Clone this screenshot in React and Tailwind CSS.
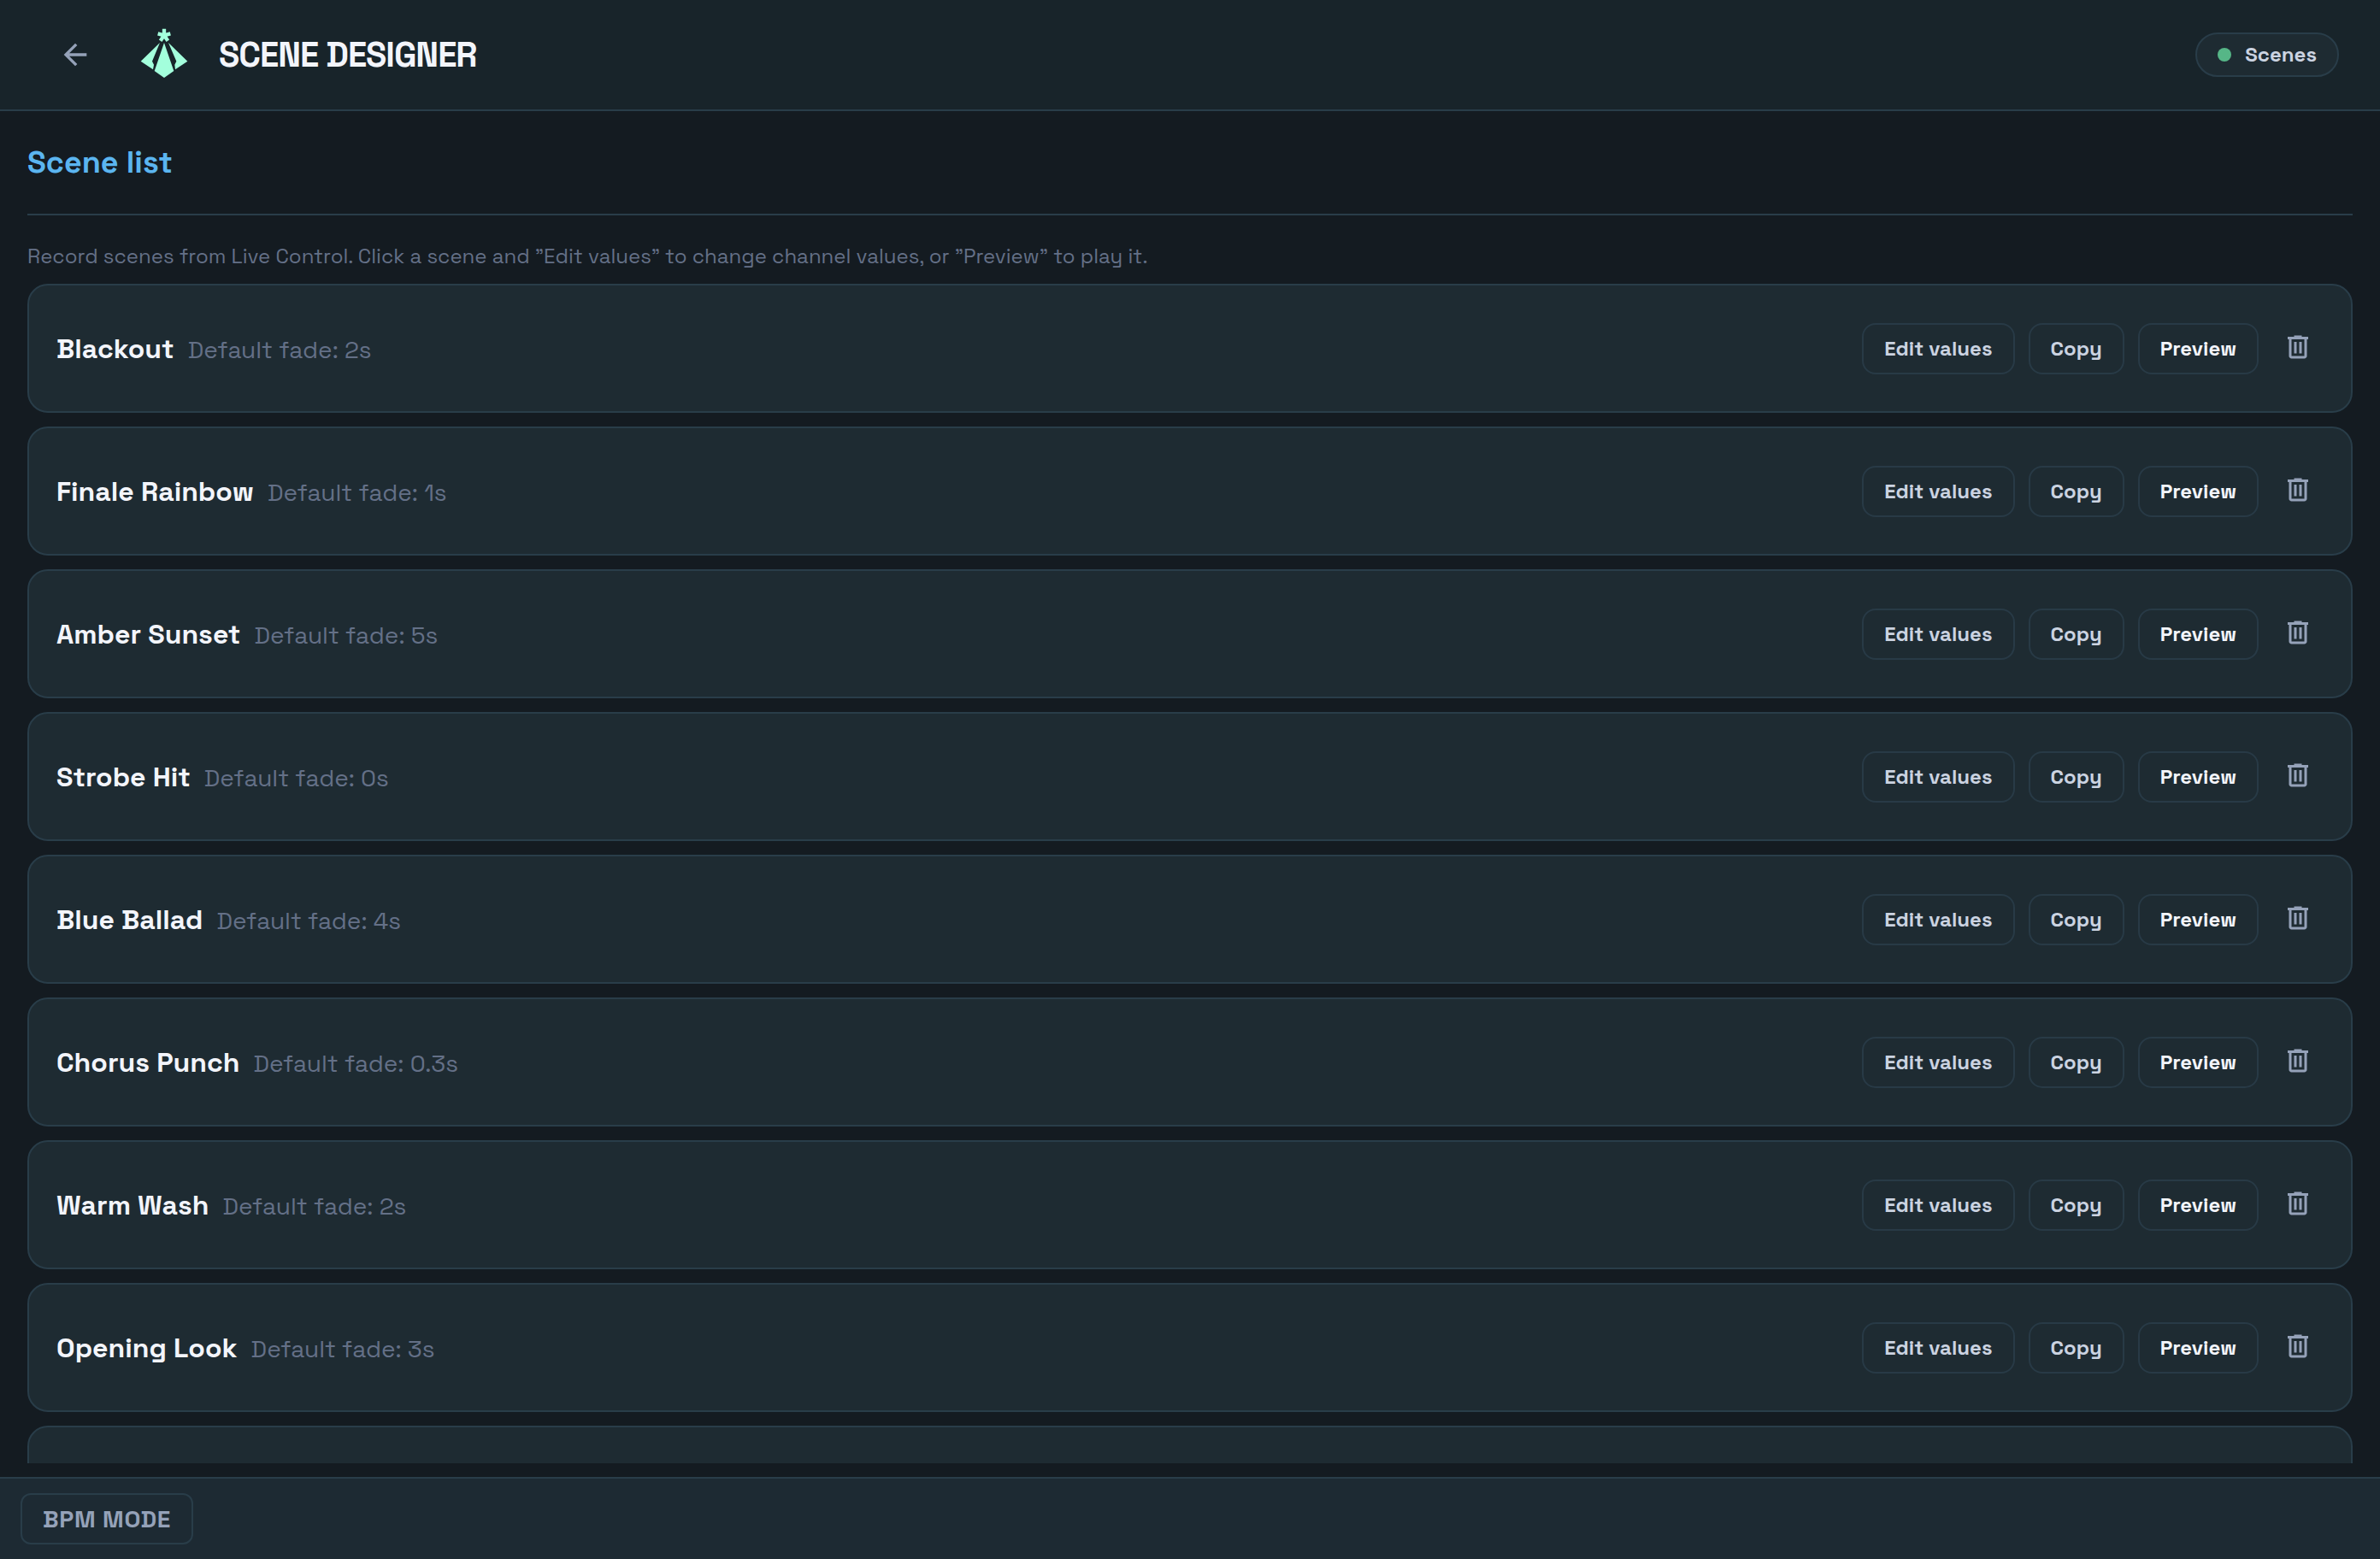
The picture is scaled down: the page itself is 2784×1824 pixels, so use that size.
import React from "react";

const scenes = [
  { id: 1, name: "Blackout", fade: 2 },
  { id: 2, name: "Finale Rainbow", fade: 1 },
  { id: 3, name: "Amber Sunset", fade: 5 },
  { id: 4, name: "Strobe Hit", fade: 0 },
  { id: 5, name: "Blue Ballad", fade: 4 },
  { id: 6, name: "Chorus Punch", fade: 0.3 },
  { id: 7, name: "Warm Wash", fade: 2 },
  { id: 8, name: "Opening Look", fade: 3 },
];

const BackIcon = () => (
  <svg className="w-10 h-10" viewBox="0 0 24 24" fill="currentColor">
    <path d="m7.825 13 5.6 5.6L12 20l-8-8 8-8 1.425 1.4-5.6 5.6H20v2z" />
  </svg>
);

const TrashIcon = () => (
  <svg className="w-9 h-9" viewBox="0 0 24 24" fill="currentColor">
    <path d="M7 21q-.825 0-1.412-.587T5 19V6H4V4h5V3h6v1h5v2h-1v13q0 .825-.587 1.413T17 21zM17 6H7v13h10zM9 17h2V8H9zm4 0h2V8h-2z" />
  </svg>
);

const Logo = () => (
  <svg className="w-16 h-[68px]" viewBox="0 0 192 204" fill="#a3ffdc">
    <path
      d="M96 40V17M96 40l-22-6M96 40l22-6M96 40l-13 19M96 40l13 19"
      stroke="#a3ffdc"
      strokeWidth="13"
    />
    <path d="M96 66l34 99-34 24-34-24z" />
    <path d="M81 66L14 131l43 29 3-17-6-12z" />
    <path d="M111 66l67 65-43 29-2-17 6-12z" />
  </svg>
);

const SceneButton = ({ children, bright }) => (
  <button
    className={`h-[60px] px-6 rounded-2xl border-2 border-[#283a46] text-2xl font-semibold whitespace-nowrap ${
      bright ? "text-[#f3f5fb]" : "text-[#cbd3e1]"
    }`}
  >
    {children}
  </button>
);

const SceneCard = ({ scene }) => (
  <div className="h-[151px] shrink-0 flex items-center justify-between px-8 rounded-3xl border-2 border-[#293d49] bg-[#1e2b32]">
    <div className="flex items-baseline gap-4">
      <h3 className="text-[32px] leading-[48px] font-semibold text-[#f3f5fb]">
        {scene.name}
      </h3>
      <span className="text-[28px] text-[#647087]">
        Default fade: {scene.fade}s
      </span>
    </div>
    <div className="flex items-center gap-4">
      <SceneButton>Edit values</SceneButton>
      <SceneButton>Copy</SceneButton>
      <SceneButton bright>Preview</SceneButton>
      <button className="w-[60px] h-[60px] pb-1 flex items-center justify-center text-[#95a2b9]">
        <TrashIcon />
      </button>
    </div>
  </div>
);

export default function App() {
  return (
    <div className="w-full h-[1824px] flex flex-col overflow-hidden bg-[#141b21] font-['Space_Grotesk','Inter',sans-serif]">
      {/* Header */}
      <header className="h-[130px] shrink-0 flex items-center justify-between pl-[68px] pr-12 border-b-2 border-[#293d49] bg-[#18242a]">
        <div className="flex items-center">
          <button className="mr-[52px] text-[#95a2b9]">
            <BackIcon />
          </button>
          <div className="mr-8 pb-1">
            <Logo />
          </div>
          <h1 className="pt-0.5 text-[40px] leading-[60px] font-bold tracking-tight text-[#f3f5fb]">
            SCENE DESIGNER
          </h1>
        </div>
        <div className="h-[52px] px-6 flex items-center gap-4 rounded-full border-2 border-[#293d49] bg-[#1e2b32]">
          <span className="w-4 h-4 rounded-full bg-[#56b687]" />
          <span className="text-2xl font-semibold text-[#cbd3e1]">Scenes</span>
        </div>
      </header>

      {/* Scene list */}
      <main className="flex-1 min-h-0 flex flex-col px-8 pb-4">
        <div className="h-[122px] shrink-0 pt-[33px] border-b-2 border-[#293d49]">
          <h2 className="text-4xl leading-[54px] font-semibold text-[#5bb5f0]">
            Scene list
          </h2>
        </div>
        <div className="flex-1 min-h-0 flex flex-col gap-4 overflow-hidden pt-8">
          <p className="h-8 shrink-0 text-2xl leading-8 text-[#647087]">
            Record scenes from Live Control. Click a scene and ”Edit values” to
            change channel values, or ”Preview” to play it.
          </p>
          {scenes.map((scene) => (
            <SceneCard key={scene.id} scene={scene} />
          ))}
          <div className="h-[151px] shrink-0 rounded-3xl border-2 border-[#293d49] bg-[#1e2b32]" />
        </div>
      </main>

      {/* Footer */}
      <footer className="h-24 shrink-0 flex items-center px-6 border-t-2 border-[#293d49] bg-[#1d2a33]">
        <button className="h-[60px] px-6 rounded-xl border-2 border-[#293d49] text-[28px] font-bold tracking-wide text-[#95a2b9]">
          BPM MODE
        </button>
      </footer>
    </div>
  );
}
